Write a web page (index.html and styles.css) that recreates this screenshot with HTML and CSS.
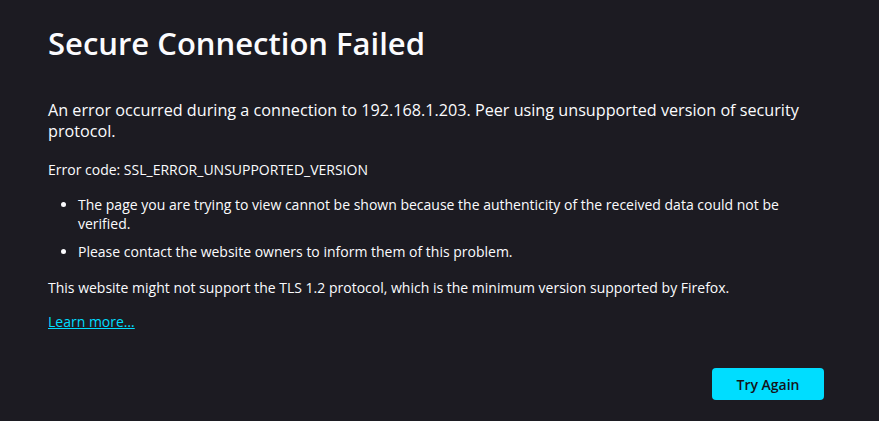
FILE: index.html
```html
<!DOCTYPE html>
<html lang="en">
<head>
<meta charset="utf-8">
<title>Secure Connection Failed</title>
<link rel="stylesheet" href="styles.css">
</head>
<body>
<main class="page">
  <h1 class="title">Secure Connection Failed</h1>
  <p class="lead">An error occurred during a connection to 192.168.1.203. Peer using unsupported version of security protocol.</p>
  <p class="code">Error code: SSL_ERROR_UNSUPPORTED_VERSION</p>
  <ul class="reasons">
    <li>The page you are trying to view cannot be shown because the authenticity of the received data could not be verified.</li>
    <li>Please contact the website owners to inform them of this problem.</li>
  </ul>
  <p class="note">This website might not support the TLS 1.2 protocol, which is the minimum version supported by Firefox.</p>
  <p class="more"><a href="#" class="link">Learn more…</a></p>
  <div class="actions">
    <button class="btn">Try Again</button>
  </div>
</main>
</body>
</html>
```
FILE: styles.css
```css
html, body {
  margin: 0;
  background: #1c1b22;
  color: #fbfbfe;
  font-family: "Open Sans", "Noto Sans", sans-serif;
}
.page {
  width: 776px;
  padding: 23px 0 0 48px;
}
.title {
  margin: 0;
  font-size: 31px;
  font-weight: 600;
  line-height: 40px;
}
.lead {
  margin: 37px 0 0;
  font-size: 16.2px;
  line-height: 21px;
}
.code, .note, .more, .reasons {
  font-size: 14px;
  line-height: 20px;
}
.code { margin: 18px 0 0; }
.reasons {
  margin: 15px 0 0;
  padding-left: 30px;
}
.reasons li { line-height: 19px; }
.reasons li + li { margin-top: 9px; }
.note { margin: 17px 0 0; }
.more { margin: 14px 0 0; }
.link { color: #00ddff; }
.actions {
  display: flex;
  justify-content: flex-end;
  margin-top: 36px;
}
.btn {
  width: 112px;
  height: 32px;
  border: 0;
  border-radius: 4px;
  background: #00ddff;
  color: #15141a;
  font-family: inherit;
  font-size: 14px;
  font-weight: 600;
}
```
